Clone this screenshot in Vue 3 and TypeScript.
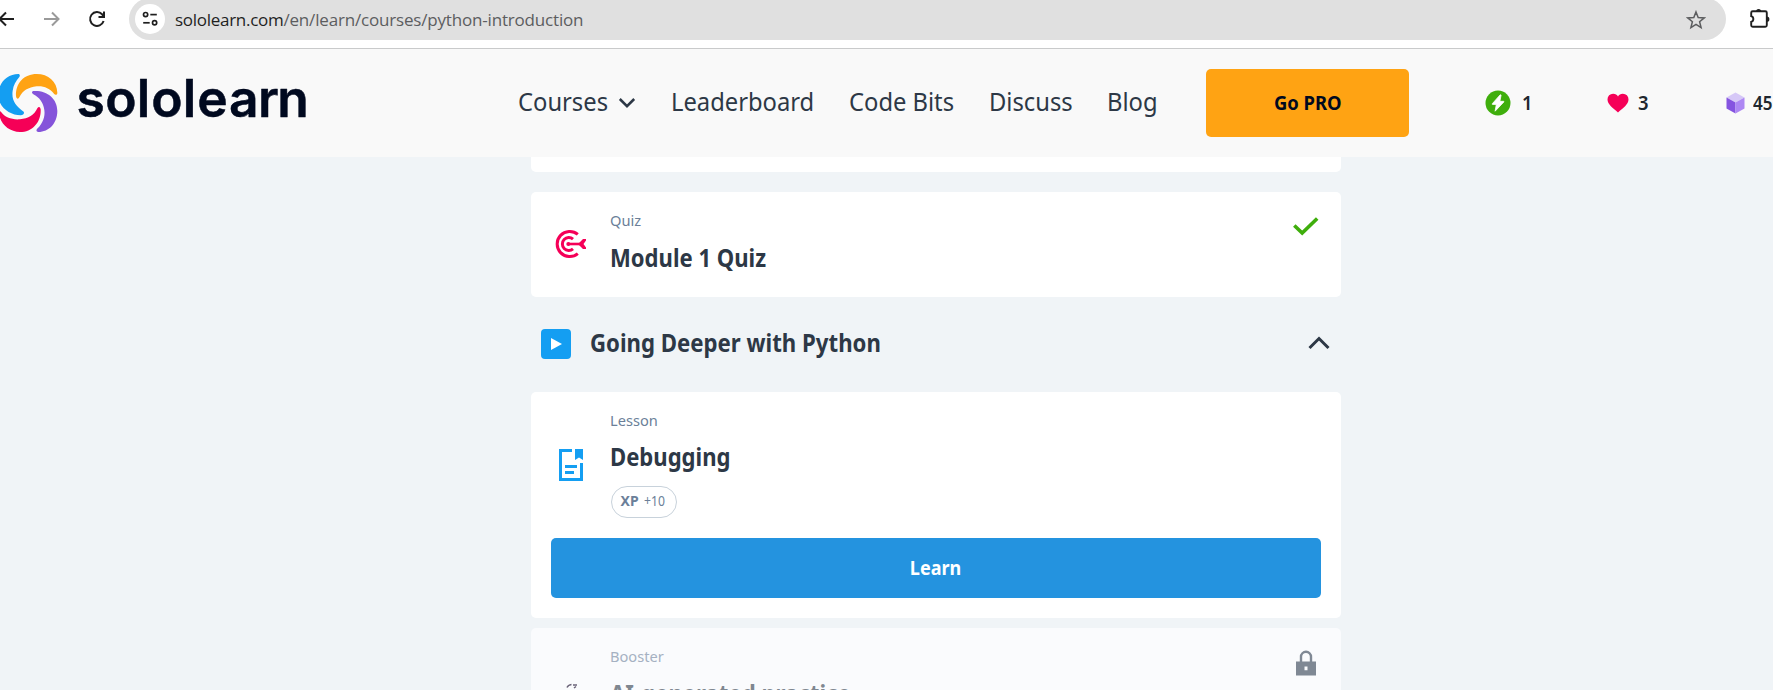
<script setup lang="ts">
interface NavLink {
  label: string
  menu?: boolean
}

const links: NavLink[] = [
  { label: 'Courses', menu: true },
  { label: 'Leaderboard' },
  { label: 'Code Bits' },
  { label: 'Discuss' },
  { label: 'Blog' },
]

const url = { host: 'sololearn.com', path: '/en/learn/courses/python-introduction' }
const stats = { streak: 1, hearts: 3, bits: 45 }
</script>

<template>
  <div class="window">
    <div class="toolbar">
      <svg class="tool back" viewBox="0 0 20 20"><path d="M16 10H1.5M8 3.5 1.5 10 8 16.5" /></svg>
      <svg class="tool forward" viewBox="0 0 20 20"><path d="M2 10h14M10 3.5l6.500 6.500L10 16.500" /></svg>
      <svg class="tool reload" viewBox="0 0 20 20">
        <path d="M16.600 12a6.900 6.900 0 1 1-1.500-6.700L16.500 7" />
        <path d="M17 2.500V8h-5.500" />
      </svg>
      <div class="address">
        <span class="site">
          <svg viewBox="0 0 18 18">
            <circle cx="4.600" cy="4.600" r="2.100" /><path d="M9.300 4.600h6.500" />
            <circle cx="13.600" cy="12.800" r="2.100" /><path d="M2.200 12.800h6.500" />
          </svg>
        </span>
        <span class="host">{{ url.host }}</span><span class="path">{{ url.path }}</span>
        <svg class="star" viewBox="0 0 20 20">
          <path d="M10 1.900l2.200 5.600 6 .4-4.600 3.800 1.500 5.900L10 14.400l-5.100 3.200 1.500-5.900L1.800 7.900l6-.4z" />
        </svg>
      </div>
      <svg class="extensions" viewBox="0 0 23 24">
        <path class="body" d="M2.200 4.800Q2.200 3.300 3.700 3.300H16.300Q17.800 3.300 17.800 4.800V17.200Q17.800 18.700 16.300 18.700H3.700Q2.200 18.700 2.200 17.200V13.800A2.900 2.900 0 0 0 2.200 8.200Z" />
        <path class="knob" d="M7 3.500a2.600 2.600 0 0 1 5.200 0zM17.800 8.600a2.600 2.600 0 0 1 0 5.200z" />
      </svg>
    </div>

    <header class="header">
      <svg class="brand" viewBox="0 0 320 108">
        <g transform="translate(0 -49) scale(.33333)">
          <path fill="#149ef2" d="M55 222C20 222-5 250-5 285-5 322 30 345 62 346 70 346 74 340 71 335 46 318 34 300 38 272 40 255 48 243 58 231 61 226 59 222 55 222Z" />
          <path fill="#ffa313" d="M48 288C46 250 72 222 110 222 145 222 171 245 172 278 172 286 165 285 162 281 150 265 130 257 110 259 85 262 68 272 58 292 55 299 49 297 48 288Z" />
          <path fill="#8554da" d="M100 273C140 270 172 295 172 333 172 370 147 396 115 396 108 396 108 389 113 385 128 370 136 350 133 330 130 308 118 292 100 283 94 279 95 274 100 273Z" />
          <path fill="#f50057" d="M-3 335Q0 331 4 337C14 352 36 360 60 358 85 356 103 345 112 325 116 318 121 320 122 328 124 365 98 396 60 396 25 396-3 368-3 335Z" />
        </g>
        <text y="67.500" x="76.500 105.300 136.800 151.300 182.800 197.300 229 258 277.300">sololearn</text>
      </svg>
      <nav class="nav">
        <a v-for="link in links" :key="link.label" class="link">
          <span>{{ link.label }}</span>
          <svg v-if="link.menu" viewBox="0 0 18 12"><path d="M1.800 2 9 9.200 16.200 2" /></svg>
        </a>
      </nav>
      <button class="pro"><span>Go PRO</span></button>
      <div class="stat streak">
        <svg viewBox="0 0 26 26">
          <circle cx="13" cy="13" r="12.500" fill="#3fae0c" />
          <path d="M15.200 4.800 7.300 13.700q-.5.700.4.700h3.600l-1.200 6.800 8.700-9.200q.5-.7-.4-.7h-3.500l1.200-6.200z" fill="#fff" stroke="#fff" stroke-width=".8" stroke-linejoin="round" />
        </svg>
        <span>{{ stats.streak }}</span>
      </div>
      <div class="stat hearts">
        <svg viewBox="0 0 22 20">
          <path d="M11 19.500C6 15 .5 11.500.5 6.500A5.600 5.600 0 0 1 6.200.7C8.400.7 10 1.800 11 3.400 12 1.800 13.600.7 15.800.7A5.600 5.600 0 0 1 21.500 6.500C21.500 11.500 16 15 11 19.500Z" fill="#f50057" />
        </svg>
        <span>{{ stats.hearts }}</span>
      </div>
      <div class="stat bits">
        <svg viewBox="0 0 19 22">
          <path d="M9.500.5 18.500 5.500 9.500 10.500.5 5.500Z" fill="#d6c8f7" />
          <path d="M.5 5.500 9.500 10.500V21.500L.5 16.500Z" fill="#8554e0" />
          <path d="M18.500 5.500 9.500 10.500V21.500L18.500 16.500Z" fill="#ad87f3" />
        </svg>
        <span>{{ stats.bits }}</span>
      </div>
    </header>

    <main class="course">
      <section class="card previous"></section>

      <section class="card quiz">
        <div class="icon">
          <svg width="32" height="30" viewBox="0 0 32 30" fill="none" stroke="#f50057" stroke-width="3">
            <path d="M23.800 5.300A12.600 12.600 0 1 0 23.800 24.700" />
            <path d="M19 10.200A6.400 6.400 0 1 0 19 19.800" />
            <path d="M14 15H27" stroke-width="2.600" />
            <circle cx="14.300" cy="15" r="2" fill="#f50057" stroke="none" />
            <path d="M24 15 29 10H32V11.500L29.500 15 32 18.500V20H29Z" fill="#f50057" stroke="none" />
          </svg>
        </div>
        <div class="info">
          <div class="kind"><span>Quiz</span></div>
          <h3 class="title"><span>Module 1 Quiz</span></h3>
        </div>
        <svg class="status" viewBox="0 0 32 32" fill="none" stroke="#3fae0c" stroke-width="3.600">
          <path d="M4.300 15.500 12.200 23 27.200 8.500" />
        </svg>
      </section>

      <div class="module">
        <svg class="play" viewBox="0 0 30 30">
          <rect width="30" height="30" rx="4" fill="#149ef2" />
          <path d="M10 9v12l11-6z" fill="#fff" />
        </svg>
        <h2 class="title"><span>Going Deeper with Python</span></h2>
        <svg class="fold" viewBox="0 0 22 14"><path d="M1.500 12 11 2.500 20.500 12" /></svg>
      </div>

      <section class="card lesson">
        <div class="summary">
          <div class="icon">
            <svg width="24" height="32" viewBox="0 0 24 32">
              <path d="M13 1.500H1.500V30.500H22.500V14" fill="none" stroke="#149ef2" stroke-width="3" />
              <path d="M16 0H24V11L20 8.500 16 11ZM6 16H18V19H6ZM6 22H15V25H6Z" fill="#149ef2" />
            </svg>
          </div>
          <div class="info">
            <div class="kind"><span>Lesson</span></div>
            <h3 class="title"><span>Debugging</span></h3>
            <div class="xp"><b>XP</b><span>+10</span></div>
          </div>
        </div>
        <button class="learn"><span>Learn</span></button>
      </section>

      <section class="card booster">
        <div class="icon">
          <svg width="30" height="32" viewBox="0 0 30 32" fill="none" stroke="#6b6479" stroke-width="1.500">
            <path d="M11 4.500Q12 2 15.500 1.500M17 2h4M18 5l2-1.500M9 9v14h12V9z" />
          </svg>
        </div>
        <div class="info">
          <div class="kind"><span>Booster</span></div>
          <h3 class="title"><span>AI-generated practice</span></h3>
        </div>
        <svg class="status" viewBox="0 0 32 32">
          <path d="M11 15V9.800a5 5 0 0 1 10 0V15" fill="none" stroke="#7f8894" stroke-width="2.400" />
          <path fill-rule="evenodd" d="M6 14.500H26V28.500H6ZM14.500 19.500V23.300H17.500V19.500Z" fill="#7f8894" />
        </svg>
      </section>
    </main>
  </div>
</template>

<style>
html, body { overflow: hidden; background: #f0f4f7; }
</style>

<style scoped>
.window {
  width: 1773px;
  height: 690px;
  overflow: hidden;
  background: #f0f4f7;
  color: #2d3846;
  font-family: "Noto Sans", "Open Sans", sans-serif;
}
svg { display: block; flex: none; }
span, b { white-space: nowrap; }

/* Browser toolbar */
.toolbar {
  display: flex;
  height: 49px;
  box-sizing: border-box;
  border-bottom: 1px solid #c9cacb;
  background: #fff;
}
.tool {
  width: 20px;
  height: 20px;
  margin-top: 9px;
  fill: none;
  stroke: #1f1f1f;
  stroke-width: 2;
}
.back { margin-left: -2px; }
.forward { margin-left: 24px; stroke: #9a9a9a; }
.reload { margin-left: 24.500px; }
.address {
  display: flex;
  align-items: center;
  width: 1597px;
  height: 42px;
  margin: -2px 0 0 22.500px;
  box-sizing: border-box;
  padding-left: 6px;
  border-radius: 21px;
  background: #e0e0e0;
  font: 17px/24px "Open Sans", "Noto Sans", sans-serif;
}
.site {
  display: flex;
  align-items: center;
  justify-content: center;
  width: 30px;
  height: 30px;
  margin-right: 10px;
  border-radius: 50%;
  background: #fff;
}
.site svg { width: 18px; height: 18px; fill: none; stroke: #1f1f1f; stroke-width: 1.700; }
.host { color: #1f1f1f; letter-spacing: -0.280px; margin-top: 2px; }
.path { color: #5c5d5f; letter-spacing: -0.180px; margin-top: 2px; }
.star { width: 20px; height: 20px; margin: 2px 20px 0 auto; fill: none; stroke: #5c5d5f; stroke-width: 1.500; }
.extensions { width: 23px; height: 24px; margin: 8px 0 0 23px; }
.extensions .body { fill: none; stroke: #1f1f1f; stroke-width: 1.900; }
.extensions .knob { fill: #1f1f1f; }

/* Site header */
.header { display: flex; align-items: center; height: 108px; background: #f9f9f9; }
.brand { width: 320px; height: 108px; }
.brand text {
  fill: #00091f;
  stroke: #00091f;
  stroke-width: .5px;
  stroke-linejoin: round;
  font: 600 51.500px Inter, sans-serif;
}
.nav {
  display: grid;
  grid-template-columns: 153.500px 177.500px 140.500px 117.500px 100px;
  margin: -4px 0 0 197.500px;
}
.link { display: flex; align-items: center; font-size: 25px; line-height: 34px; }
.link span { transform: scaleX(.95); transform-origin: left; }
.link svg {
  width: 18px;
  height: 12px;
  margin: 3px 0 0 6px;
  fill: none;
  stroke: #2d3846;
  stroke-width: 2.500;
}
.pro {
  width: 203px;
  height: 68px;
  margin-left: -.5px;
  padding: 0 0 2px;
  border: 0;
  border-radius: 5px;
  background: #ffa313;
  color: #00091f;
  font: 700 20px "Noto Sans", sans-serif;
}
.pro span { display: inline-block; transform: scaleX(.92); }
.stat {
  display: flex;
  align-items: center;
  color: #20262e;
  font-size: 20px;
  font-weight: 600;
  line-height: 28px;
}
.stat span { margin-top: -1px; transform: scaleX(.92); transform-origin: left; }
.streak { width: 122px; margin-left: 75.500px; }
.streak svg { width: 26px; height: 26px; margin-right: 11px; }
.hearts { width: 119px; }
.hearts svg { width: 22px; height: 20px; margin-right: 9px; }
.bits { width: 47px; }
.bits svg { width: 19px; height: 22px; margin-right: 8px; }
.bits span { transform: scaleX(.85); }

/* Course list */
.course { width: 810px; margin-left: 531px; }
.card {
  display: flex;
  box-sizing: border-box;
  padding: 18px 20px 20px;
  border-radius: 5px;
  background: #fff;
}
.previous { height: 15px; padding: 0; border-radius: 0 0 5px 5px; }
.quiz { height: 105px; margin-top: 20px; }
.icon { display: flex; width: 40px; align-items: center; justify-content: center; }
.quiz .icon svg { margin-left: -2px; }
.info { margin-left: 18.500px; }
.kind { height: 20px; color: #6b7f99; font-size: 15px; line-height: 20px; }
.kind span { display: inline-block; transform: scaleX(.975); transform-origin: left; margin-left: .5px; }
.title { height: 34px; margin: 10px 0 0; font-size: 25px; font-weight: 700; line-height: 34px; }
.title span { display: inline-block; transform: scaleX(.883); transform-origin: left; }
.status { width: 32px; height: 32px; margin-left: auto; }
.quiz .status { margin-right: -1px; }
.module { display: flex; align-items: center; height: 95px; box-sizing: border-box; padding: 0 11.500px 1px 10px; }
.play { width: 30px; height: 30px; }
.module .title { margin: -4px 0 0 19px; }
.module .title span { transform: scaleX(.888); }
.fold { width: 22px; height: 14px; margin: -2px 0 0 auto; fill: none; stroke: #2d3846; stroke-width: 3; }
.lesson { flex-direction: column; height: 226px; }
.summary { display: flex; height: 108px; }
.summary .icon { padding-top: 2px; }
.summary .title { margin-top: 9px; }
.xp {
  display: flex;
  width: 66px;
  height: 32px;
  box-sizing: border-box;
  margin: 13px 0 0 1px;
  padding-left: 9px;
  border: 1px solid #c8d2db;
  border-radius: 16px;
  color: #6b7f99;
  font-size: 14px;
  line-height: 28px;
}
.xp b { margin-right: 5.500px; }
.xp span { transform: scaleX(.87); transform-origin: left; }
.learn {
  height: 60px;
  margin-top: 20px;
  padding: 0 0 2px;
  border: 0;
  border-radius: 5px;
  background: #2493df;
  color: #fff;
  font: 700 20px "Noto Sans", sans-serif;
}
.learn span { display: inline-block; transform: scaleX(.9); }
.booster { height: 130px; margin-top: 10px; background: #fafbfd; }
.booster .kind { color: #a5b1c2; }
.booster .title { color: #7f8790; }
.booster .title span { transform: scaleX(.888); }
.booster .icon { align-items: flex-start; padding-top: 37px; }
.booster .status { margin: 1px -1px 0 auto; }
</style>
